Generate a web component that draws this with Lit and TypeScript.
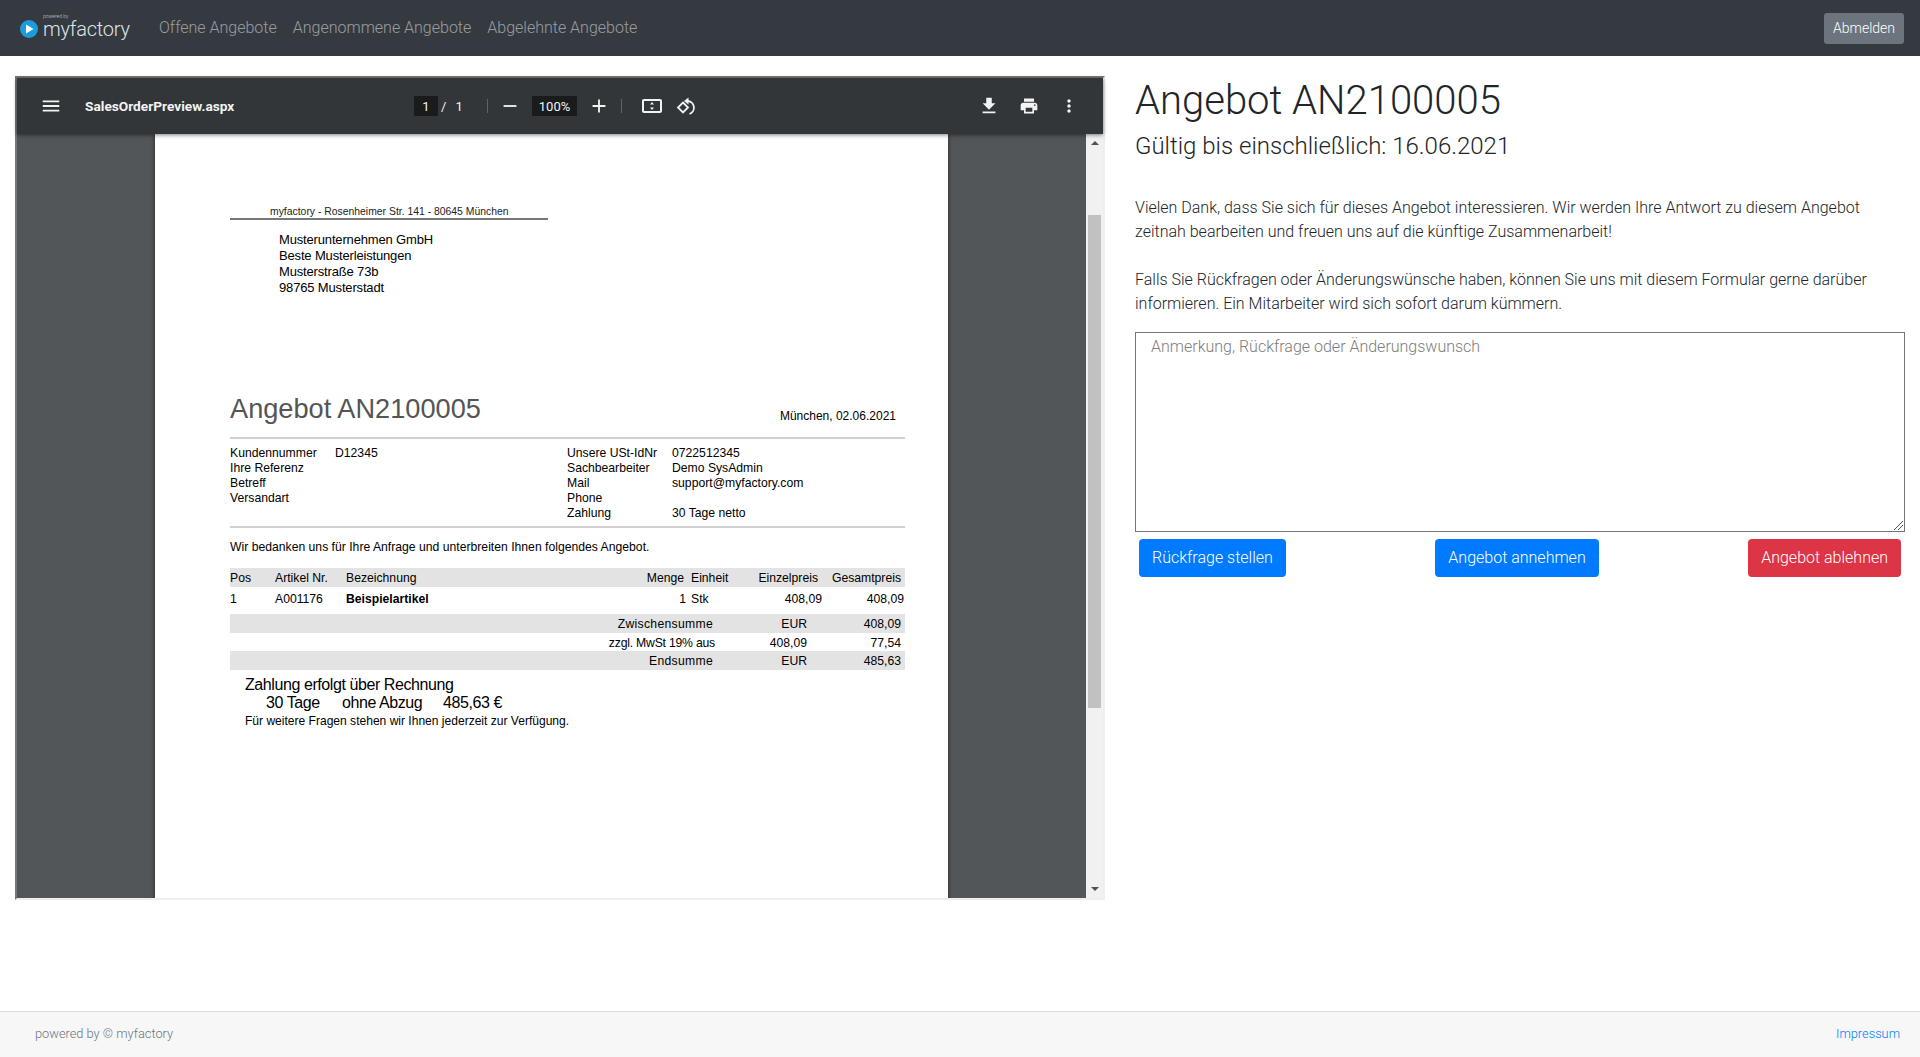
import { LitElement, html, css } from "lit";
import { customElement } from "lit/decorators.js";

const ICONS = {
  menu: "M3 18h18v-2H3v2zm0-5h18v-2H3v2zm0-7v2h18V6H3z",
  minus: "M19 13H5v-2h14v2z",
  plus: "M19 13h-6v6h-2v-6H5v-2h6V5h2v6h6v2z",
  fit: "M20 5H4c-1.1 0-2 .9-2 2v10c0 1.1.9 2 2 2h16c1.1 0 2-.9 2-2V7c0-1.1-.9-2-2-2zm0 12H4V7h16v10zM12 8l-2 2.5h4zM12 16l2-2.5h-4z",
  download: "M19 9h-4V3H9v6H5l7 7 7-7zM5 18v2h14v-2H5z",
  print:
    "M19 8H5c-1.66 0-3 1.34-3 3v6h4v4h12v-4h4v-6c0-1.66-1.34-3-3-3zm-3 11H8v-5h8v5zm3-7c-.55 0-1-.45-1-1s.45-1 1-1 1 .45 1 1-.45 1-1 1zm-1-9H6v4h12V3z",
  more: "M12 8c1.1 0 2-.9 2-2s-.9-2-2-2-2 .9-2 2 .9 2 2 2zm0 2c-1.1 0-2 .9-2 2s.9 2 2 2 2-.9 2-2-.9-2-2-2zm0 6c-1.1 0-2 .9-2 2s.9 2 2 2 2-.9 2-2-.9-2-2-2z",
};

const icon = (d: string, cls: string) =>
  html`<svg class="ic ${cls}" viewBox="0 0 24 24"><path d=${d}></path></svg>`;

const INFO_LEFT = [
  ["Kundennummer", "D12345"],
  ["Ihre Referenz", ""],
  ["Betreff", ""],
  ["Versandart", ""],
];
const INFO_RIGHT = [
  ["Unsere USt-IdNr", "0722512345"],
  ["Sachbearbeiter", "Demo SysAdmin"],
  ["Mail", "support@myfactory.com"],
  ["Phone", ""],
  ["Zahlung", "30 Tage netto"],
];

@customElement("app-root")
class AppRoot extends LitElement {
  static styles = css`
    :host {
      display: flex;
      flex-direction: column;
      min-height: 1057px;
      font-family: Roboto, "Liberation Sans", sans-serif;
      font-weight: 300;
      font-size: 16px;
      color: #212529;
      background: #fff;
    }
    * {
      box-sizing: border-box;
    }

    /* top bar */
    .navbar {
      height: 56px;
      background: #343a40;
      display: flex;
      align-items: center;
      padding: 0 16px 0 20px;
    }
    .brand {
      display: flex;
      align-items: center;
      width: 131px;
      color: #dfe3e6;
    }
    .brand svg {
      width: 18px;
      height: 18px;
      margin-top: 2px;
    }
    .brand-text {
      margin-left: 5px;
      display: flex;
      flex-direction: column;
    }
    .brand-small {
      font-size: 5px;
      line-height: 5px;
      margin-bottom: -3px;
      opacity: 0.8;
    }
    .brand-big {
      font-size: 20px;
      letter-spacing: -0.25px;
      line-height: 26px;
    }
    .nav-link {
      padding: 0 8px 2px;
      color: rgba(255, 255, 255, 0.5);
    }
    .nav-links {
      display: flex;
      flex: 1;
    }
    .logout {
      width: 80px;
      height: 31px;
      border-radius: 3px;
      background: #6c757d;
      color: #fff;
      font-size: 14px;
      display: flex;
      align-items: center;
      justify-content: center;
    }

    /* main area */
    .main {
      flex: 1;
      display: flex;
      padding-top: 20px;
    }
    .col-left {
      width: 1120px;
      padding: 0 15px;
    }
    .col-right {
      width: 800px;
      padding: 1px 15px 0;
    }

    /* pdf viewer */
    .viewer {
      width: 1090px;
      height: 824px;
      border: 2px solid;
      border-color: #767676 #eee #eee #767676;
      display: flex;
      flex-direction: column;
      font-family: "Liberation Sans", Arial, sans-serif;
    }
    .toolbar {
      height: 56px;
      flex: none;
      background: #323639;
      display: flex;
      align-items: center;
      color: #f1f3f4;
      font-family: Roboto, sans-serif;
      font-size: 13px;
      font-weight: 400;
      padding-left: 23px;
      box-shadow: 0 1px 4px rgba(0, 0, 0, 0.5);
      position: relative;
      z-index: 1;
    }
    .ic {
      fill: #f1f3f4;
      flex: none;
    }
    .s24 {
      width: 24px;
      height: 24px;
    }
    .s22 {
      width: 22px;
      height: 22px;
    }
    .s20 {
      width: 20px;
      height: 20px;
    }
    .ml11 {
      margin-left: 11px;
    }
    .ml18 {
      margin-left: 18px;
    }
    .ml19 {
      margin-left: 19px;
    }
    .ml20 {
      margin-left: 20px;
    }
    .push {
      margin-left: auto;
    }
    .rot {
      fill: none;
      stroke: #f1f3f4;
      stroke-width: 1.8;
    }
    .rot path.fill {
      fill: #f1f3f4;
      stroke: none;
    }
    .doc-title {
      margin-left: 23px;
      width: 329px;
      font-weight: 700;
      font-size: 13.7px;
      white-space: nowrap;
    }
    .num-box {
      background: #191b1c;
      height: 20px;
      display: flex;
      align-items: center;
      justify-content: center;
    }
    .page-box {
      width: 24px;
    }
    .zoom-box {
      width: 45px;
      margin-left: 11px;
    }
    .page-count {
      width: 49px;
      padding-left: 3px;
      display: flex;
      gap: 9px;
    }
    .divider {
      width: 1px;
      height: 14px;
      background: #5f6368;
    }
    .print-end {
      margin-right: 24px;
    }

    .scroller {
      flex: 1;
      min-height: 0;
      display: flex;
    }
    .canvas {
      flex: 1;
      background: #525659;
      display: flex;
      justify-content: center;
      overflow: hidden;
    }
    .scrollbar {
      width: 17px;
      flex: none;
      background: #f1f1f1;
      display: flex;
      flex-direction: column;
      align-items: center;
    }
    .arrow {
      width: 0;
      height: 0;
      border-left: 4px solid transparent;
      border-right: 4px solid transparent;
      flex: none;
    }
    .arrow.up {
      margin-top: 7px;
      border-bottom: 4px solid #505050;
    }
    .arrow.down {
      margin-top: auto;
      margin-bottom: 7px;
      border-top: 4px solid #505050;
    }
    .thumb {
      width: 13px;
      height: 493px;
      margin-top: 70px;
      background: #c1c1c1;
      flex: none;
    }

    /* pdf page */
    .page {
      width: 793px;
      height: 900px;
      flex: none;
      background: #fff;
      color: #000;
      padding: 71px 43px 0 75px;
      box-shadow: 0 0 4px rgba(0, 0, 0, 0.6);
      font-size: 12.2px;
      line-height: 15px;
    }
    .sender {
      width: 318px;
      font-size: 10.4px;
      line-height: 13px;
      padding-left: 40px;
      color: #222;
      border-bottom: 2px solid #777;
    }
    .address {
      margin-top: 12px;
      padding-left: 49px;
      font-size: 13px;
      letter-spacing: -0.16px;
      line-height: 16px;
    }
    .title-row {
      margin-top: 97px;
      padding-right: 9px;
      display: flex;
      justify-content: space-between;
      align-items: flex-end;
    }
    .doc-head {
      font-size: 27.2px;
      line-height: 32px;
      color: #555;
    }
    .date {
      font-size: 12px;
      margin-bottom: 1px;
    }
    .rule {
      height: 2px;
      background: #d0d0d0;
    }
    .rule.first {
      margin-top: 12px;
    }
    .rule.second {
      margin-top: 5px;
    }
    .info {
      margin-top: 7px;
      display: grid;
      grid-template-columns: 337px 1fr;
      align-items: start;
    }
    .kv {
      display: grid;
      grid-template-columns: 105px 1fr;
      grid-auto-rows: 15px;
    }
    .thanks {
      margin-top: 12px;
    }
    .tbl {
      display: grid;
      grid-template-columns: 45px 71px 280px 60px 70px 66px 83px;
      height: 19px;
      line-height: 21px;
    }
    .tbl.head {
      margin-top: 13px;
      background: #e3e3e3;
    }
    .tbl.row {
      margin-top: 2px;
    }
    .tbl b {
      font-weight: 700;
    }
    .ra {
      text-align: right;
    }
    .pr1 {
      padding-right: 1px;
    }
    .pr2 {
      padding-right: 2px;
    }
    .pr4 {
      padding-right: 4px;
    }
    .pl5 {
      padding-left: 5px;
    }
    .wide {
      letter-spacing: 0.3px;
    }
    .tight {
      letter-spacing: -0.2px;
    }
    .totals {
      display: grid;
      grid-template-columns: 485px 92px 98px;
      height: 19px;
      line-height: 21px;
    }
    .totals.shade {
      background: #e3e3e3;
    }
    .totals.plain {
      height: 18px;
      line-height: 20px;
    }
    .totals.first {
      margin-top: 6px;
    }
    .payment {
      margin-top: 6px;
      padding-left: 15px;
    }
    .pay-big {
      font-size: 16px;
      letter-spacing: -0.42px;
      line-height: 18px;
    }
    .pay-terms {
      display: grid;
      grid-template-columns: 76px 101px auto;
      padding-left: 21px;
    }
    .pay-note {
      margin-top: 2px;
      font-size: 12.05px;
    }

    /* right column */
    h1 {
      margin: 0 0 7px;
      font-size: 40px;
      line-height: 48px;
      font-weight: 300;
    }
    h4 {
      margin: 0 0 35px;
      font-size: 24px;
      line-height: 29px;
      font-weight: 300;
    }
    p {
      margin: 0 0 24px;
      line-height: 24px;
    }
    p.last {
      margin-bottom: 16px;
    }
    .note {
      height: 200px;
      border: 1px solid #767676;
      padding: 2px 15px;
      color: #7d7d7d;
      line-height: 24px;
      position: relative;
    }
    .grip {
      position: absolute;
      right: 1px;
      bottom: 1px;
      width: 10px;
      height: 10px;
      stroke: #555;
      stroke-width: 1;
    }
    .actions {
      margin-top: 7px;
      padding: 0 4px;
      display: flex;
      justify-content: space-between;
    }
    .btn {
      height: 38px;
      padding: 0 13px 1px;
      border-radius: 4px;
      color: #fff;
      display: flex;
      align-items: center;
      white-space: nowrap;
    }
    .btn.blue {
      background: #007bff;
    }
    .btn.red {
      background: #dc3545;
    }

    /* footer */
    .footer {
      height: 46px;
      flex: none;
      background: #f7f7f7;
      border-top: 1px solid #dcdcdc;
      padding: 0 20px 2px 35px;
      display: flex;
      align-items: center;
      justify-content: space-between;
      font-size: 12.8px;
      color: #6c757d;
    }
    .footer .link {
      color: #007bff;
    }
  `;

  renderKv(rows: string[][]) {
    return html`<div class="kv">
      ${rows.map(([k, v]) => html`<div>${k}</div><div>${v}</div>`)}
    </div>`;
  }

  render() {
    return html`
      <div class="navbar">
        <div class="brand">
          <svg viewBox="0 0 18 18">
            <circle cx="9" cy="9" r="9" fill="#1b9ddb"></circle>
            <path d="M6 4.5v9l7.5-4.5z" fill="#fff"></path>
          </svg>
          <div class="brand-text">
            <span class="brand-small">powered by</span>
            <span class="brand-big">myfactory</span>
          </div>
        </div>
        <div class="nav-links">
          <span class="nav-link">Offene Angebote</span>
          <span class="nav-link">Angenommene Angebote</span>
          <span class="nav-link">Abgelehnte Angebote</span>
        </div>
        <div class="logout">Abmelden</div>
      </div>

      <div class="main">
        <div class="col-left">
          <div class="viewer">
            <div class="toolbar">
              ${icon(ICONS.menu, "s22")}
              <span class="doc-title">SalesOrderPreview.aspx</span>
              <span class="num-box page-box">1</span>
              <span class="page-count"><span>/</span><span>1</span></span>
              <span class="divider"></span>
              ${icon(ICONS.minus, "s22 ml11")}
              <span class="num-box zoom-box">100%</span>
              ${icon(ICONS.plus, "s22 ml11")}
              <span class="ml11 divider"></span>
              ${icon(ICONS.fit, "s24 ml18")}
              <svg class="rot s24 ml11" viewBox="0 0 24 24">
                <path d="M8 8.5l5 5-5 5-5-5z"></path>
                <path d="M12.5 7a6.7 6.7 0 0 1 2 13"></path>
                <path class="fill" d="M13.5 3.5v7l-4.5-3.5z"></path>
              </svg>
              ${icon(ICONS.download, "s22 push")}
              ${icon(ICONS.print, "s20 ml19")}
              ${icon(ICONS.more, "s20 ml20 print-end")}
            </div>
            <div class="scroller">
              <div class="canvas">
                <div class="page">
                  <div class="sender">myfactory - Rosenheimer Str. 141 - 80645 München</div>
                  <div class="address">
                    <div>Musterunternehmen GmbH</div>
                    <div>Beste Musterleistungen</div>
                    <div>Musterstraße 73b</div>
                    <div>98765 Musterstadt</div>
                  </div>
                  <div class="title-row">
                    <span class="doc-head">Angebot AN2100005</span>
                    <span class="date">München, 02.06.2021</span>
                  </div>
                  <div class="rule first"></div>
                  <div class="info">
                    ${this.renderKv(INFO_LEFT)} ${this.renderKv(INFO_RIGHT)}
                  </div>
                  <div class="rule second"></div>
                  <div class="thanks">Wir bedanken uns für Ihre Anfrage und unterbreiten Ihnen folgendes Angebot.</div>
                  <div class="tbl head">
                    <span>Pos</span>
                    <span>Artikel Nr.</span>
                    <span>Bezeichnung</span>
                    <span class="ra pr2">Menge</span>
                    <span class="pl5">Einheit</span>
                    <span class="ra pr4">Einzelpreis</span>
                    <span class="ra pr4">Gesamtpreis</span>
                  </div>
                  <div class="tbl row">
                    <span>1</span>
                    <span>A001176</span>
                    <b>Beispielartikel</b>
                    <span class="ra">1</span>
                    <span class="pl5">Stk</span>
                    <span class="ra">408,09</span>
                    <span class="ra pr1">408,09</span>
                  </div>
                  <div class="totals shade first">
                    <span class="ra pr2 wide">Zwischensumme</span>
                    <span class="ra">EUR</span>
                    <span class="ra pr4">408,09</span>
                  </div>
                  <div class="totals plain">
                    <span class="ra tight">zzgl. MwSt 19% aus</span>
                    <span class="ra">408,09</span>
                    <span class="ra pr4">77,54</span>
                  </div>
                  <div class="totals shade">
                    <span class="ra pr2 wide">Endsumme</span>
                    <span class="ra">EUR</span>
                    <span class="ra pr4">485,63</span>
                  </div>
                  <div class="payment">
                    <div class="pay-big">Zahlung erfolgt über Rechnung</div>
                    <div class="pay-big pay-terms">
                      <span>30 Tage</span><span>ohne Abzug</span><span>485,63 €</span>
                    </div>
                    <div class="pay-note">Für weitere Fragen stehen wir Ihnen jederzeit zur Verfügung.</div>
                  </div>
                </div>
              </div>
              <div class="scrollbar">
                <span class="arrow up"></span>
                <span class="thumb"></span>
                <span class="arrow down"></span>
              </div>
            </div>
          </div>
        </div>

        <div class="col-right">
          <h1>Angebot AN2100005</h1>
          <h4>Gültig bis einschließlich: 16.06.2021</h4>
          <p>Vielen Dank, dass Sie sich für dieses Angebot interessieren. Wir werden Ihre Antwort zu diesem Angebot zeitnah bearbeiten und freuen uns auf die künftige Zusammenarbeit!</p>
          <p class="last">Falls Sie Rückfragen oder Änderungswünsche haben, können Sie uns mit diesem Formular gerne darüber informieren. Ein Mitarbeiter wird sich sofort darum kümmern.</p>
          <div class="note">
            Anmerkung, Rückfrage oder Änderungswunsch
            <svg class="grip" viewBox="0 0 10 10"><path d="M1 10L10 1M5 10l5-5"></path></svg>
          </div>
          <div class="actions">
            <div class="btn blue">Rückfrage stellen</div>
            <div class="btn blue">Angebot annehmen</div>
            <div class="btn red">Angebot ablehnen</div>
          </div>
        </div>
      </div>

      <div class="footer">
        <span>powered by © myfactory</span>
        <span class="link">Impressum</span>
      </div>
    `;
  }
}

export { AppRoot };
